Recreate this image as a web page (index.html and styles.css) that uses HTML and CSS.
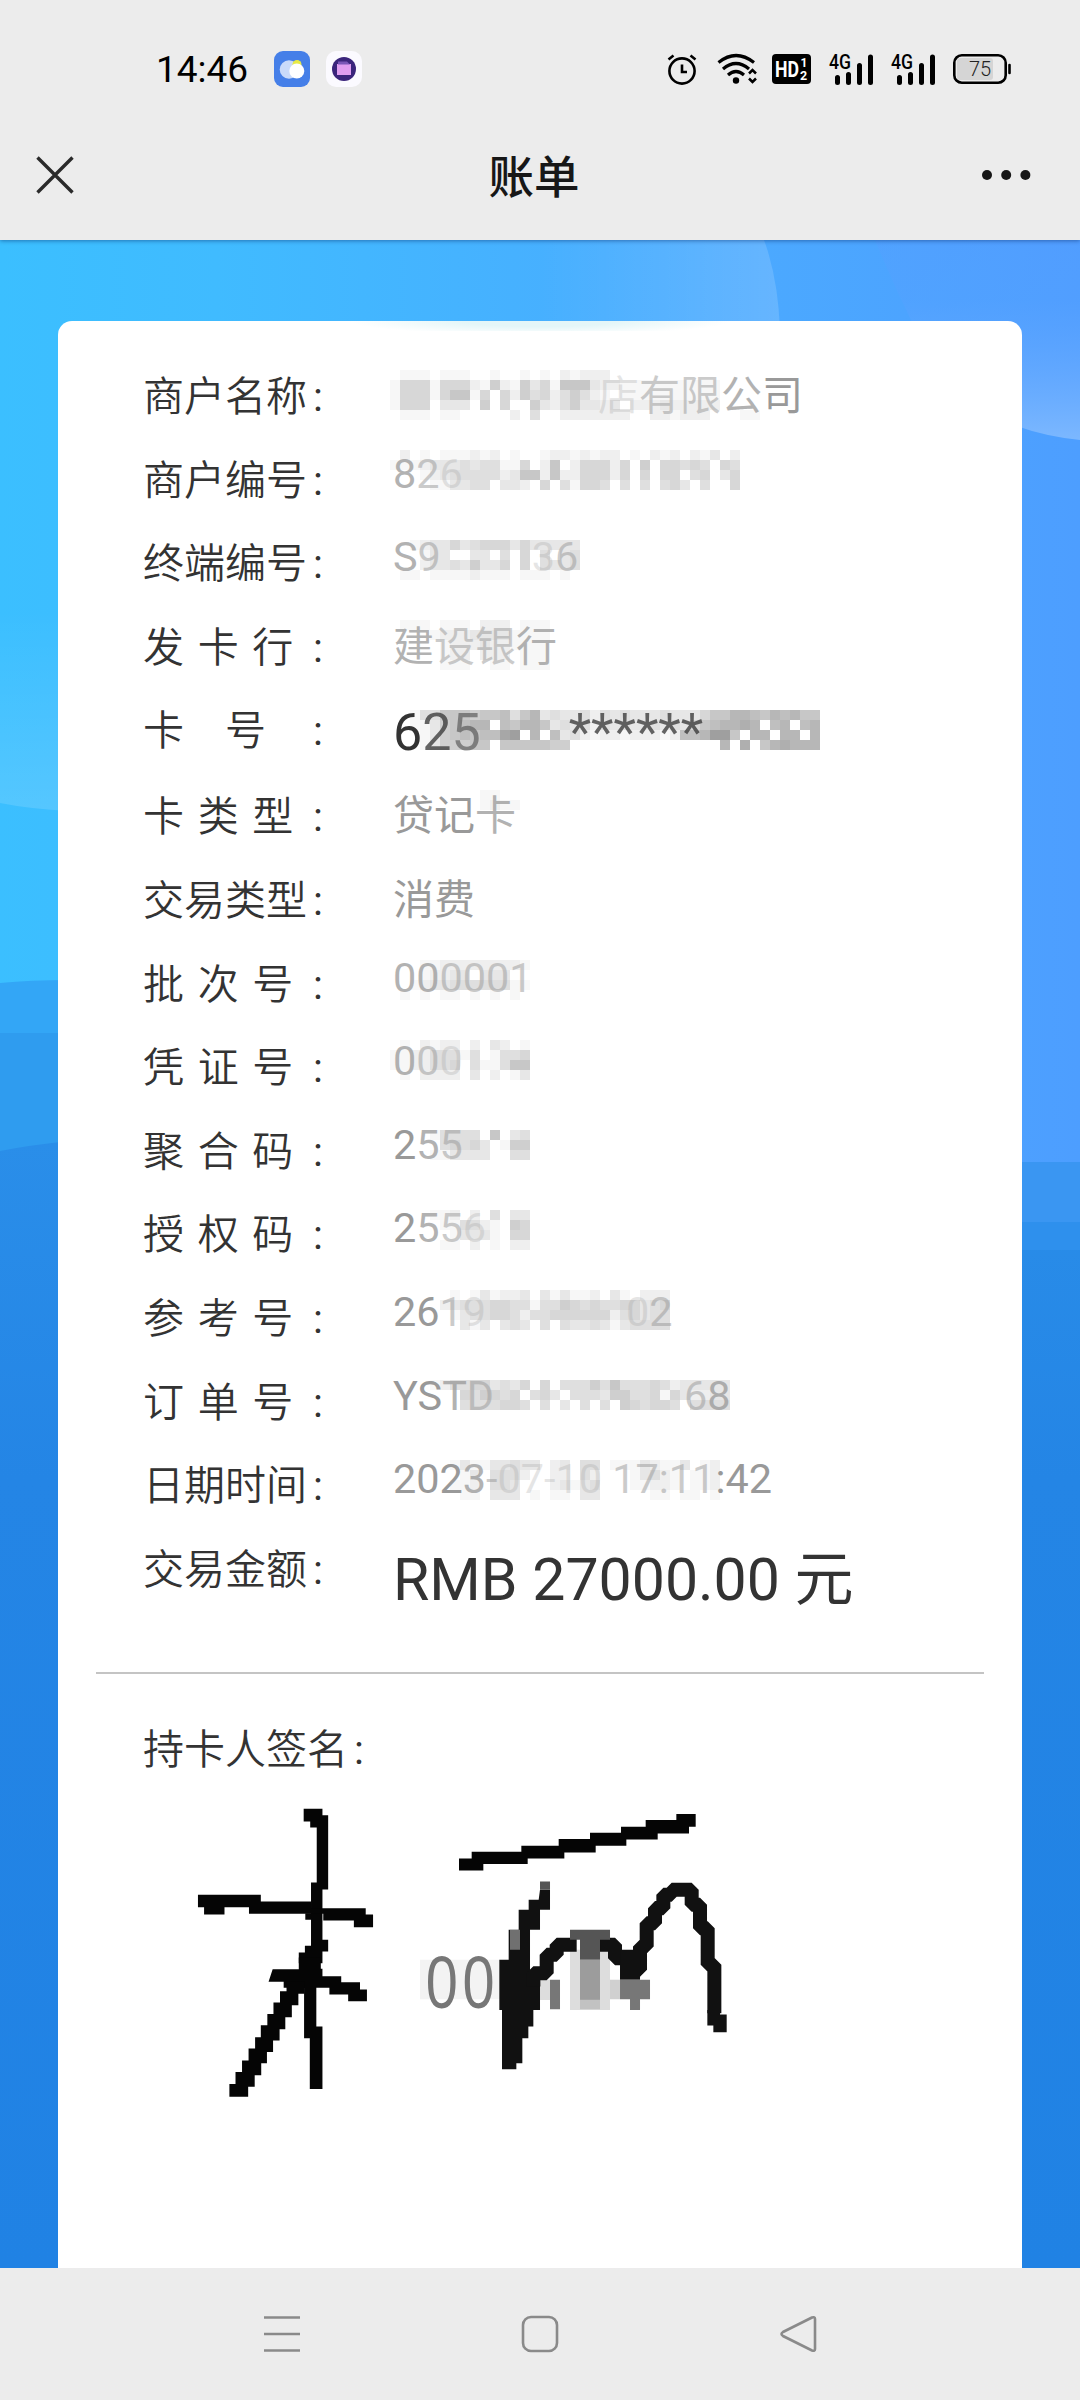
FILE: index.html
```html
<!DOCTYPE html>
<html lang="zh-CN">
<head>
<meta charset="utf-8">
<title>账单</title>
<link rel="stylesheet" href="styles.css">
</head>
<body>
<header class="top">
  <div class="status">
    <span class="clock">14:46</span>
    <svg class="app" viewBox="0 0 36 36"><rect width="36" height="36" rx="9" fill="#457fe8"/><circle cx="15" cy="18.500" r="9.300" fill="#c9dafa"/><circle cx="23" cy="13.500" r="4.500" fill="#e8ea45"/><circle cx="22.800" cy="20" r="7.500" fill="#fff"/></svg>
    <svg class="app" viewBox="0 0 36 36"><rect width="36" height="36" rx="10" fill="#fbfaff"/><circle cx="18" cy="18" r="12" fill="#3b257c"/><path d="M11 13h14v11H11z" fill="#df9df0"/><path d="M12 10.500h9l3 3H12z" fill="#7956b7"/></svg>
    <span class="grow"></span>
    <svg class="alarm" viewBox="0 0 30 32" fill="none" stroke="#000" stroke-width="2.600"><circle cx="15" cy="18" r="12.600"/><path d="M15 11.500V19h5M1.500 6.500l5-4M28.500 6.500l-5-4"/></svg>
    <svg class="wifi" viewBox="0 0 40 32" fill="none" stroke="#000" stroke-width="3.200"><path d="M1.500 9.500Q19 -4.500 37 9.500M6 16Q19 5 32 16M11 22Q19 15 27 22"/><circle cx="19" cy="27.500" r="3.200" fill="#000" stroke="none"/><path d="M32 20.500l3.500-3.500 3.500 3.500M32 25.500l3.500 3.500 3.500-3.500" stroke-width="2.500"/></svg>
    <svg class="hd" viewBox="0 0 39 30"><rect width="39" height="30" rx="4"/><g fill="#fff" font-family="Roboto, sans-serif" font-weight="700"><text x="3" y="23" font-size="22" textLength="24" lengthAdjust="spacingAndGlyphs">HD</text><text x="28.500" y="13" font-size="12">1</text><text x="28" y="25.500" font-size="12.500">2</text></g></svg>
    <svg class="signal" viewBox="0 0 44 31"><text x="0" y="15" font-family="Roboto, sans-serif" font-weight="500" font-size="20" textLength="22" lengthAdjust="spacingAndGlyphs">4G</text><path d="M8.500 28.500v-5M19.500 28.500v-8M30.500 28.500v-17M41.500 28.500V3" stroke="#000" stroke-width="5" stroke-linecap="round"/></svg>
    <svg class="signal" viewBox="0 0 44 31"><text x="0" y="15" font-family="Roboto, sans-serif" font-weight="500" font-size="20" textLength="22" lengthAdjust="spacingAndGlyphs">4G</text><path d="M8.500 28.500v-5M19.500 28.500v-8M30.500 28.500v-17M41.500 28.500V3" stroke="#000" stroke-width="5" stroke-linecap="round"/></svg>
    <svg class="battery" viewBox="0 0 58 30"><rect x="4" y="4" width="36" height="22" rx="3" fill="#d5d5d5"/><rect x="1.300" y="1.300" width="51.400" height="27.400" rx="7.500" fill="none" stroke="#000" stroke-width="2.600"/><path d="M56.500 11v8" stroke="#000" stroke-width="2.600" stroke-linecap="round"/><text x="16" y="22" font-family="Roboto, sans-serif" font-size="20" fill="#222" font-weight="300">75</text></svg>
  </div>
  <div class="titlebar">
    <svg class="close" viewBox="0 0 38 38"><path d="M1.500 1.500l35 35M36.500 1.500l-35 35" stroke="#2a2a2a" stroke-width="3.400"/></svg>
    <h1>账单</h1>
    <svg class="more" viewBox="0 0 50 12" fill="#171717"><circle cx="6" cy="6" r="5"/><circle cx="25.200" cy="6" r="5"/><circle cx="44.400" cy="6" r="5"/></svg>
  </div>
</header>
<main class="page">
  <svg class="scene" viewBox="0 240 1080 2028" preserveAspectRatio="none">
    <defs>
      <linearGradient id="sky"><stop offset="0" stop-color="#3bbfff"/><stop offset=".2" stop-color="#40bbff"/><stop offset=".7" stop-color="#4ba9ff"/><stop offset="1" stop-color="#4d9eff"/></linearGradient>
      <linearGradient id="glow" x1="0" y1="0" x2="0" y2="1"><stop offset=".65" stop-color="#fff" stop-opacity="0"/><stop offset="1" stop-color="#fff" stop-opacity=".13"/></linearGradient>
      <linearGradient id="arc"><stop offset=".5" stop-color="#fff" stop-opacity="0"/><stop offset="1" stop-color="#fff" stop-opacity=".15"/></linearGradient>
      <linearGradient id="moon" x1="0" y1="0" x2="0" y2="1"><stop offset="0" stop-color="#5a9cff" stop-opacity=".3"/><stop offset=".3" stop-color="#5a9fff" stop-opacity=".3"/><stop offset="1" stop-color="#84bcff" stop-opacity=".85"/></linearGradient>
      <linearGradient id="sea" x1="0" y1="0" x2="0" y2="1"><stop offset="0" stop-color="#2a8ee9"/><stop offset=".3" stop-color="#2485e5"/><stop offset="1" stop-color="#2082e4"/></linearGradient>
    </defs>
    <path fill="url(#sky)" d="M0 240h1080v2028H0z"/>
    <path fill="url(#arc)" d="M300 240h464q14 38 16 90H300z"/>
    <path fill="url(#glow)" d="M0 240h70v571q-40-2-70-8z"/>
    <path fill="url(#moon)" d="M875 240h205v200q-130-14-168-118-20-40-37-82z"/>
    <path fill="#33a6f6" d="M0 983q30-3 70-3v60H0z"/>
    <path fill="#2f9cef" d="M0 1033h70v130H0z"/>
    <path fill="#3a96f2" d="M1010 1162h70v60h-70z"/>
    <path fill="#2e90ed" d="M1010 1222h70v40h-70z"/>
    <path fill="url(#sea)" d="M0 1151q30-6 70-10l940 109h70v1018H0z"/>
  </svg>
  <article class="card">
    <dl class="rows" id="rows"></dl>
    <section class="sign">
      <h2>持卡人签名<span class="colon">:</span></h2>
      <svg class="ink" viewBox="0 220 1568 1070" preserveAspectRatio="none">
        <g fill="#050505">
          <path d="M352 327h46v20h14v222h-14v151h14v35h-14v35h-58v-32h15v-20h15v-78h-14v-20h14v-92h14V383h-16v-18h-16z"/>
          <path d="M93 585h154v20h123v20h134v19h18v38h-47v-20h-75v-20H218v-20h-60v22h-50v-22H93z"/>
          <path d="M276 808h64v-35h54v34h4v22h46v18h46v22h17v35h-46v-20h-46v-20h-32v116h15v187h-31v-152h-14V864h-50v-18h-37z"/>
          <path d="M310 846h44v36h-15v34h-16v36h-16v36h-14v34h-16v34h-15v34h-14v36h-16v34h-16v30h-46v-38h15v-36h16v-34h16v-36h16v-34h14v-36h16v-34h15v-34h16v-34h16z"/>
        </g>
        <g transform="translate(416.500 240) scale(.8167 1)">
          <path fill="#dedede" d="M270 540h240v118H270z" opacity=".35"/>
          <path fill="#ddd" d="M720 510h120v180H720zM600 600h60v60h-60z"/>
          <path fill="#050505" d="M387 236h38v-20h149v-18h112v-20h94v-19h93v-18h74v-20h92v-18h58v38h-20v20h-94v18h-94v19h-92v20h-94v18H593v17H460v19h-73z"/>
          <path fill="#111" d="M630 330h30v60h-30v60h-30v150h30v90h-20v50h-15v35h-18v75h-18v18h-43V690h-8V540h28V450h30V390h30v-30h30z"/>
          <path fill="none" stroke="#111" stroke-width="42" stroke-linejoin="bevel" d="M610 620V580H650V525H680V495H740M810 495H855V535H895V570H930V500H950V430H975V385H1000V345H1025V330H1085V375H1110V445H1133V555H1153V700"/>
          <path fill="#111" d="M870 510h60v90h-60zM1132 690h38v14h20v53h-40v-20h-18z"/>
          <path fill="#555" d="M630 305h30v25h-30zM720 450h120v30H720zM750 480h60v60h-60z"/>
          <path fill="#9c9c9c" d="M750 540h60v120h-60z"/>
          <path fill="#777" d="M660 600h30v88h-30zM870 600h90v58h-90zM900 658h30v32h-30z"/>
          <path fill="#b0b0b0" d="M840 600h30v58h-30zM750 660h60v28h-60zM540 450h30v60h-30z" opacity=".6"/>
          <g transform="translate(287 684) scale(.78 1)"><text class="stamp" x="0" y="0" textLength="265" lengthAdjust="spacing">00</text></g>
        </g>
      </svg>
    </section>
  </article>
</main>
<footer class="nav">
  <svg viewBox="0 0 40 40"><path d="M2 3.500h36M2 20h36M2 36.500h36"/></svg>
  <svg viewBox="0 0 40 40"><rect x="3" y="3" width="34" height="34" rx="8"/></svg>
  <svg viewBox="0 0 40 40"><path d="M34 3.500L5 18Q2 20 5 22L34 36.500Q37 37.500 37 35V5Q37 2.500 34 3.500z"/></svg>
</footer>
<script src="rows.js"></script>
</body>
</html>
```
FILE: styles.css
```css
* { box-sizing: border-box; }
body {
  margin: 0;
  width: 1080px;
  height: 2400px;
  display: flex;
  flex-direction: column;
  overflow: hidden;
  background: #ececec;
  font-family: Roboto, "Noto Sans CJK SC", sans-serif;
  color: #333;
}
svg { display: block; flex: none; overflow: visible; }

.top { height: 240px; flex: none; position: relative; z-index: 1; background: #ececec; box-shadow: 0 1px 4px rgba(0, 30, 90, .45); }
.status { height: 138px; display: flex; align-items: center; padding: 0 69px 0 156px; }
.clock { font-size: 37px; color: #000; width: 118px; }
.app { width: 36px; height: 36px; margin-right: 16px; }
.grow { flex: 1; }
.alarm { width: 30px; height: 32px; margin-right: 20px; }
.wifi { width: 40px; height: 32px; margin-right: 15px; }
.hd { width: 39px; height: 30px; margin-right: 18px; }
.signal { width: 44px; height: 31px; margin-right: 18px; }
.battery { width: 58px; height: 30px; }
.titlebar { height: 74px; display: grid; grid-template-columns: 1fr auto 1fr; align-items: center; padding: 0 49px 0 36px; }
.close { width: 38px; height: 38px; }
.titlebar h1 { margin: 0; padding: 8px 0 0 1px; font-size: 45.5px; line-height: 66px; font-weight: 500; color: #171717; }
.more { width: 50px; height: 12px; justify-self: end; }

.page { flex: 1; min-height: 0; position: relative; padding: 81px 58px 0; display: flex; }
.scene { position: absolute; inset: 0; width: 100%; height: 100%; }
.card {
  position: relative;
  flex: 1;
  border-radius: 14px 14px 0 0;
  padding: 32px 38px 0;
  background: radial-gradient(ellipse 190px 14px at 50% 0, #e4f6f8 40%, #fff) top / 100% 10px no-repeat, #fff;
}
.rows { margin: 0; height: 1321px; border-bottom: 2px solid #c4c4c4; padding-left: 47px; }
.row { display: flex; height: 83.6px; font-size: 41px; line-height: 83.6px; white-space: nowrap; }
.row dt { width: 206px; margin: -1px 44px 0 0; font-family: "Noto Sans CJK SC", sans-serif; font-weight: 350; }
.colon { font-family: Roboto, sans-serif; font-weight: 400; letter-spacing: 0; padding-left: 6px; }
.row dd { margin: 0; position: relative; color: #999; }
.row .plain { position: relative; top: 2px; }
.row.digits dd { font-size: 41.4px; }
.row.digits dd .plain { top: -4px; }
.row.number { height: 86px; }
.row.number dd { font-size: 52px; color: #333; }
.row.number dd .plain { top: 4px; }
.row.amount dd { font-size: 59px; color: #333; }
.row.amount dd .plain { top: 12px; }
.fade1 { opacity: .75; }
.fade2 { opacity: .5; }
.fade3 { opacity: .25; }
.gap { display: inline-block; }
.blocks { position: absolute; left: -3px; }

.sign { padding-left: 47px; }
.sign h2 { margin: 0; padding-top: 31px; font: 350 41px/83px "Noto Sans CJK SC", sans-serif; }
.ink { width: 640px; height: 357px; margin: -19px 0 0 17px; }
.stamp { font: 222px "Liberation Sans", sans-serif; fill: #777; }

.nav { height: 132px; flex: none; display: flex; justify-content: space-between; align-items: center; padding: 0 262px; background: #ececec; position: relative; }
.nav svg { width: 40px; height: 40px; fill: none; stroke: #8a8a8a; stroke-width: 2.6; }
```
FILE: rows.js
```
// Each value lists its runs as [text, fade]; a number in place of text is a gap in px.
// "blocks" is the mosaic over a value: one hex digit of darkness per 10px cell, y = its page offset.
const rows = [
  { label: '商户名称', runs: [[205], ['店', 3], ['有', 2], ['限', 2], ['公', 1], ['司', 0]], y: 370, blocks: [
    '0111011100100101021222000000000000000000',
    '1555155521621635177732211111111110000000',
    '1555157715052645246421011111111110000000',
    '1555033306050063246332302223222220000000',
    '0111011000002040022222220022122200011000'] },
  { label: '商户编号', type: 'digits', runs: [['8', 1], ['2', 2], ['6', 3]], y: 450, blocks: [
    '02010111212010012212122010212021302',
    '11123334344115027025552506055454054',
    '00012344444237727225552505055045035',
    '00001133440332050415540404045304005'] },
  { label: '终端编号', type: 'digits', runs: [['S', 1], ['9', 2], [91], ['3', 3], ['6', 2]], y: 540, blocks: [
    '0012335345553533333',
    '0001330033040504034',
    '0002334363350504334',
    '0110111121110111010'] },
  { label: '发卡行', runs: [['建', 1], ['设', 2], ['银', 2], ['行', 1]], y: 620, blocks: [
    '01110111022201110', '00001222333311110', '00000122232211110', '00000122022201110', '00000111001101110'] },
  { label: '卡号', type: 'number', runs: [['6', 0], ['2', 1], ['5', 2], [88], ['***', 1], ['***', 1]], y: 710, blocks: [
    '0014477767784793433424343334333577998798977',
    '00113678990879973434243433434357899a9089089',
    '00013678788bc0908342122122212889cc709909909',
    '00013666770777776600000000000000090a079a999'] },
  { label: '卡类型', runs: [['贷记', 0], ['卡', 1]], y: 790, blocks: ['0000000001100', '0000000001211'] },
  { label: '交易类型', runs: [['消费', 0]] },
  { label: '批次号', type: 'digits', runs: [['00', 1], ['0001', 2]], y: 960, blocks: [
    '00011222222221', '00012233033300', '00123344444411', '01010110101010'] },
  { label: '凭证号', type: 'digits', runs: [['0', 1], ['0', 2], ['0', 3]], y: 1040, blocks: [
    '01021220203201', '11224441401445', '11224450411477', '01022220302013'] },
  { label: '聚合码', type: 'digits', runs: [['2', 0], ['5', 1], ['5', 2]], y: 1130, blocks: [
    '00001444407034', '00000454530166', '00001133330044'] },
  { label: '授权码', type: 'digits', runs: [['2', 0], ['5', 1], ['5', 2], ['6', 3]], y: 1210, blocks: [
    '00001120204033', '00000114421065', '00000013331055', '00000110201022'] },
  { label: '参考号', type: 'digits', runs: [['2', 0], ['6', 0], ['1', 2], ['9', 3], [140], ['0', 3], ['2', 2]], y: 1290, blocks: [
    '0000001013122303131120310222', '0000023444554414465454455345', '0000001344554244555555245344', '0000000313034304043343134444'] },
  { label: '订单号', type: 'digits', runs: [['YS', 0], ['T', 1], ['D', 2], [190], ['6', 2], ['8', 1]], y: 1380, blocks: [
    '0000124455343505044464744454233333', '0000000546545045304443664451532233', '0000000444455404030404065455404444'] },
  { label: '日期时间', type: 'digits', runs: [['202', 0], ['3', 1], ['-', 2], ['07-', 3], ['10', 3], [' 17', 2], [':11', 2], [':42', 0]], y: 1460, blocks: [
    '000000131133433023044011132113012000', '000000013044420022042000134210112000', '000000112044300023134000112210112000', '000000011033301011033000001101101000'] },
  { label: '交易金额', type: 'amount', runs: [['RMB 27000.00 元', 0]] },
];

const mosaic = (grid) => {
  const cells = grid.flatMap((line, y) => [...line].map((c, x) => {
    const g = 255 - parseInt(c, 16) * 8;
    return c === '0' ? '' : `<path d="M${x * 10} ${y * 10}h10v10h-10z" fill="rgb(${g},${g},${g})"/>`;
  }));
  return `<svg width="440" height="50" shape-rendering="crispEdges">${cells.join('')}</svg>`;
};

let rowTop = 353;
document.getElementById('rows').innerHTML = rows.map((r) => {
  const text = r.runs.map(([t, f]) => typeof t === 'number'
    ? `<span class="gap" style="width:${t}px"></span>`
    : `<span class="fade${f}">${t}</span>`).join('');
  const block = r.blocks ? `<span class="blocks" style="top:${Math.round(r.y - rowTop)}px">${mosaic(r.blocks)}</span>` : '';
  rowTop += r.type === 'number' ? 86 : 83.6;
  const n = r.label.length;
  const spread = (164 - 41 * n) / n;
  return `<div class="row ${r.type || ''}"><dt><span style="letter-spacing:${spread}px">${r.label}</span><span class="colon">:</span></dt><dd>${block}<span class="plain">${text}</span></dd></div>`;
}).join('');
```
